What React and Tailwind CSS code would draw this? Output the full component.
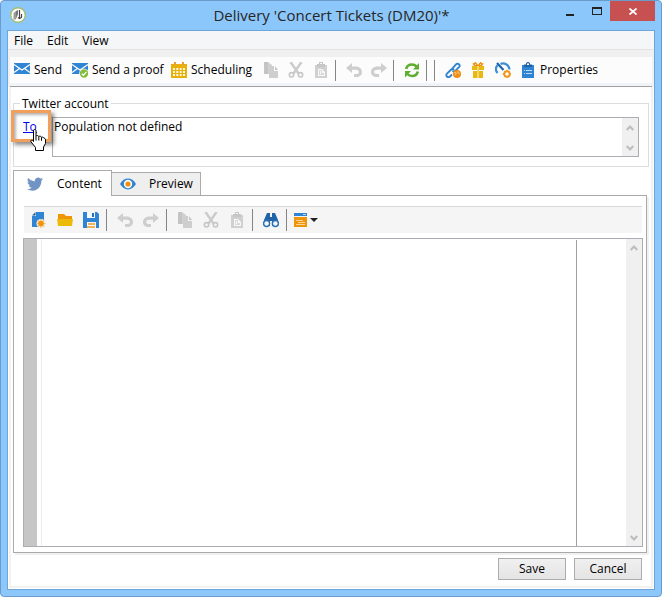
import React from "react";

function Icon({ children, className = "" }) {
  return (
    <svg viewBox="0 0 16 16" className={`h-4 w-4 shrink-0 ${className}`} fill="none" aria-hidden="true">
      {children}
    </svg>
  );
}

const MailIcon = () => (
  <Icon>
    <path d="M0 1h16v11H0z" fill="#2f84d3" />
    <path d="M0 2.500l8 5.500 8-5.500M0 10.500l5.500-4M16 10.500L10.500 6.500" stroke="#fff" strokeWidth="1.200" />
  </Icon>
);

const ProofIcon = () => (
  <Icon>
    <path d="M0 1h16v11H0z" fill="#2f84d3" />
    <path d="M0 2.500l8 5.500 8-5.500M0 10.500l5.500-4" stroke="#fff" strokeWidth="1.200" />
    <circle cx="12" cy="11.500" r="4.800" fill="#fff" />
    <circle cx="12" cy="11.500" r="4.200" fill="#86bc3c" />
    <path d="M9.800 11.700l1.600 1.600 3-3.500" stroke="#fff" strokeWidth="1.300" />
  </Icon>
);

const CalendarIcon = () => (
  <Icon>
    <path d="M0 2h16v14H0z" fill="#e9b00c" />
    <path d="M3 0h2v3H3zM11 0h2v3h-2z" fill="#ef9a3c" />
    <path d="M2 6h2v2H2zM5.300 6h2v2h-2zM8.700 6h2v2h-2zM12 6h2v2h-2zM2 9h2v2H2zM5.300 9h2v2h-2zM8.700 9h2v2h-2zM12 9h2v2h-2zM2 12h2v2H2zM5.300 12h2v2h-2zM8.700 12h2v2h-2zM12 12h2v2h-2z" fill="#fff8dd" />
  </Icon>
);

const CopyIcon = () => (
  <Icon>
    <path d="M1 0h4v12H1z" fill="#c4c4c4" />
    <path d="M5 0l4 3v1H6v8H5z" fill="#d0d0d0" />
    <path d="M6 4h5v5h4v7H6z" fill="#cecece" />
    <path d="M12 4l3 4h-3z" fill="#c4c4c4" />
  </Icon>
);

const CutIcon = () => (
  <Icon>
    <path d="M2.500 0l8 11.500M13.500 0l-8 11.500" stroke="#cbcbcb" strokeWidth="2.400" />
    <circle cx="3.500" cy="12.800" r="2.200" stroke="#c6c6c6" strokeWidth="1.600" />
    <circle cx="12.500" cy="12.800" r="2.200" stroke="#c6c6c6" strokeWidth="1.600" />
  </Icon>
);

const PasteIcon = () => (
  <Icon>
    <path d="M2 3h12v13H2z" fill="#d0d0d0" />
    <path d="M4 5V2h2V0h4v2h2v3z" fill="#c6c6c6" />
    <path d="M7 1h2v1H7zM5 7h4l3 3v4H5z" fill="#f8f8f8" />
    <path d="M6 8h3v3h2v2H6z" fill="#dadada" />
    <path d="M7 9h1v3H7z" fill="#f8f8f8" />
  </Icon>
);

const UndoIcon = () => (
  <Icon>
    <path d="M0 6l6-5v3.400h3.500C13.500 4.400 16 6.700 16 10s-2.500 5-5.500 5H8v-3h2.500c1.500 0 2.300-.8 2.300-2 0-1.500-1.200-2.300-3-2.300H6V11z" fill="#cecece" />
  </Icon>
);

const RedoIcon = () => (
  <Icon>
    <path d="M16 6l-6-5v3.400H6.500C2.500 4.400 0 6.700 0 10s2.500 5 5.500 5H8v-3H5.500c-1.500 0-2.300-.8-2.300-2 0-1.500 1.200-2.300 3-2.300H10V11z" fill="#cecece" />
  </Icon>
);

const RefreshIcon = () => (
  <Icon>
    <path d="M2.200 7C2.800 4 5 2.500 8 2.500c2 0 3.500.8 4.500 2M13.800 9.500c-.6 3-2.800 4.500-5.800 4.500-2 0-3.500-.8-4.500-2" stroke="#5fae32" strokeWidth="2.600" />
    <path d="M15 1v6.500H9zM1 15.500V9h6z" fill="#5fae32" />
  </Icon>
);

const LinkIcon = () => (
  <Icon>
    <g stroke="#3184cd" strokeWidth="1.900" strokeLinejoin="round">
      <path d="M7 6.800L11 2.400c.8-.9 2-.9 2.900-.1.900.8.900 2 .1 2.900L10.500 8.700c-.9.800-2.200.8-3 0" />
      <path d="M9 7.800c-.8-.9-2.100-.9-3-.1L2 11.600c-.9.900-.9 2.100-.1 2.900.8.800 2.100.8 3 0L7 12.500" />
    </g>
    <circle cx="12" cy="12" r="4" fill="#ee8c13" />
    <path d="M9.300 10.300l2 .7-.5 1.500-1 .5M12.700 9.300l.3 1.700 1.700.3" stroke="#ffd9a0" strokeWidth=".8" />
  </Icon>
);

const GiftIcon = () => (
  <Icon>
    <path d="M7.500 3.500L5.500.9 3.500 2l1.500 1.700zM8.500 3.500l2-2.600 2 1.100L11 3.700z" stroke="#ef9114" strokeWidth="1.500" />
    <path d="M2 4h5v4H2zM9 4h5v4H9zM3 9h4v7H3zM9 9h4v7H9z" fill="#eab90d" />
    <path d="M7 4h2v12H7z" fill="#fff" />
    <path d="M7.300 4h1.400v12H7.300z" fill="#f0c040" />
  </Icon>
);

const GaugeIcon = () => (
  <Icon>
    <path d="M2.500 11C.5 8.500.5 5.500 2.500 3.200M5.500 1.900c3.500-1.700 8.500.6 9 5.600" stroke="#3b8fd7" strokeWidth="2.200" />
    <path d="M2 1l6.500 7" stroke="#1c65a8" strokeWidth="2.200" />
    <circle cx="12" cy="12" r="2.700" stroke="#f09a22" strokeWidth="2" fill="#fff" />
    <path d="M12 7.800v2M12 14.300v1.700M7.800 12h2M14.200 12H16M9.200 9.200l1 1M14.800 9.200l-1 1M9.200 14.800l1-1M14.800 14.800l-1-1" stroke="#f09a22" strokeWidth="1.300" />
  </Icon>
);

const PropertiesIcon = () => (
  <Icon>
    <path d="M2 3h12v13H2z" fill="#2f84d3" />
    <path d="M4 5V2.500h2V1.800A2 2 0 0 1 8 0a2 2 0 0 1 2 1.800v.7h2V5z" fill="#1c62a5" />
    <path d="M7 1.500h2v1.500H7z" fill="#fff" />
    <path d="M4 8.500h1M6 8.500h6M4 11.500h1M6 11.500h6" stroke="#bcdcf6" />
  </Icon>
);

const NewIcon = () => (
  <Icon>
    <path d="M5 0h8v8H9l-2 3v4H1V4h4z" fill="#2f84d3" />
    <path d="M1 3.500L4.500 0v3.500z" fill="#1c62a5" />
    <circle cx="10" cy="11.500" r="4.500" fill="#f5f5f5" />
    <path d="M10 7v9M5.500 11.500h9M6.800 8.300l6.400 6.400M13.200 8.300l-6.400 6.400" stroke="#f6bf75" strokeWidth="1.400" />
    <circle cx="10" cy="11.500" r="2.700" fill="#f0920c" />
  </Icon>
);

const FolderIcon = () => (
  <Icon>
    <path d="M1 2h6l2 2h6v3H1z" fill="#ef9508" />
    <path d="M0 7h16l-1 7H1z" fill="#ecba0b" />
  </Icon>
);

const SaveIcon = () => (
  <Icon>
    <path d="M0 0h14l2 2v14H0z" fill="#2f84d3" />
    <path d="M4 0h8v6H4zM4 10h9v6H4z" fill="#f5f7fa" />
    <path d="M9 1h2v4H9z" fill="#2470b9" />
    <path d="M5 12h7M4 15h8" stroke="#f09a22" strokeWidth="1.400" />
  </Icon>
);

const FindIcon = () => (
  <Icon>
    <path d="M4 1h3v4h2V1h3l3 7v6H9V9H7v5H1V8z" fill="#2063a7" />
    <circle cx="3.600" cy="11.500" r="3" fill="#f5f5f5" stroke="#2a70b5" strokeWidth="1.400" />
    <circle cx="12.400" cy="11.500" r="3" fill="#f5f5f5" stroke="#2a70b5" strokeWidth="1.400" />
  </Icon>
);

const TemplateIcon = () => (
  <Icon>
    <path d="M2 1h13v4H2z" fill="#2f84d3" />
    <path d="M2 5h13v10H2z" fill="#ef9508" />
    <path d="M11 2.500h3" stroke="#b8dbf5" />
    <path d="M2 4.500h13" stroke="#f5f5f5" />
    <path d="M4 8.500h7M6 10.500h7M4 12.500h9" stroke="#fbd49a" />
  </Icon>
);

const TwitterIcon = () => (
  <Icon>
    <path d="M16 3c-.6.300-1.200.4-1.900.5.700-.4 1.200-1 1.400-1.800-.6.400-1.300.6-2.100.8A3.300 3.300 0 0 0 7.800 5.500 9.300 9.300 0 0 1 1.100 2.100a3.300 3.300 0 0 0 1 4.400c-.5 0-1-.2-1.500-.4 0 1.600 1.100 2.900 2.600 3.200-.5.100-1 .2-1.500.1.400 1.300 1.600 2.200 3.100 2.300A6.600 6.600 0 0 1 0 13.100C6.900 17.300 14.500 13 14.400 4.700 15 4.300 15.600 3.700 16 3z" fill="#7294c4" />
  </Icon>
);

const EyeIcon = () => (
  <Icon>
    <path d="M0 8C4 .8 12 .8 16 8c-4 7.200-12 7.200-16 0z" fill="#2f84d3" />
    <circle cx="8" cy="8" r="4.200" fill="#fff" />
    <circle cx="8" cy="8" r="2.600" fill="#ef9114" />
  </Icon>
);

const HandCursor = () => (
  <svg viewBox="0 0 17 22" className="pointer-events-none absolute top-3 left-[10px] z-20 h-[22px] w-[17px]" aria-hidden="true">
    <path
      d="M3.500 1.500c0-1.300 2.500-1.300 2.500 0V7c.8-.8 2.300-.6 2.800.5.900-.6 2.300-.3 2.700.8 1-.5 2.100-.1 2.500 1 1-.2 1.500.5 1.500 1.700v3.500L13.500 18v3.500h-8V18.500L1 12.800C.3 11.300 1.800 10.500 2.800 11.500l.7 1z"
      fill="#fff"
      stroke="#000"
    />
    <path d="M6 7v4.500M8.800 7.500v4M11.500 8.300v3.500" stroke="#000" />
  </svg>
);

function Chevron({ down }) {
  return (
    <button type="button" aria-label={down ? "Scroll down" : "Scroll up"} className="flex h-4 w-4 items-center justify-center">
      <svg viewBox="0 0 8 7" className="h-[7px] w-2" fill="none" aria-hidden="true">
        <path d={down ? "M.7 1L4 4.500 7.300 1" : "M.7 6L4 2.500 7.300 6"} stroke="#bdbdbd" strokeWidth="2.200" />
      </svg>
    </button>
  );
}

function ScrollBar({ className = "" }) {
  return (
    <div className={`flex w-4 shrink-0 flex-col justify-between bg-[#f0f0f0] ${className}`}>
      <Chevron />
      <Chevron down />
    </div>
  );
}

function Tool({ label, text, className = "", children }) {
  return (
    <button type="button" aria-label={label} className={`flex shrink-0 items-center gap-1 whitespace-nowrap ${className}`}>
      {children}
      {text}
    </button>
  );
}

const Separator = ({ className = "" }) => <span className={`w-px shrink-0 bg-[#858585] ${className}`} />;

function EditTools({ gap }) {
  return (
    <div className={`flex ${gap}`}>
      <Tool label="Copy"><CopyIcon /></Tool>
      <Tool label="Cut"><CutIcon /></Tool>
      <Tool label="Paste"><PasteIcon /></Tool>
    </div>
  );
}

function HistoryTools({ gap }) {
  return (
    <div className={`flex ${gap}`}>
      <Tool label="Undo"><UndoIcon /></Tool>
      <Tool label="Redo"><RedoIcon /></Tool>
    </div>
  );
}

function TitleBar() {
  return (
    <header className="flex h-[29px] items-start">
      <svg viewBox="0 0 16 16" className="mt-[6px] ml-[9px] h-4 w-4" aria-hidden="true">
        <circle cx="8" cy="8" r="7.300" fill="#fff" stroke="#a2bd70" strokeWidth="1.400" />
        <path d="M3.500 6L6 4v8.500H3.500z" fill="#9a9a9a" />
        <path d="M6 4l2-1v4L6 12z" fill="#777" />
        <path d="M9.500 3v8M8 10.500l1.500 1 2-1V7" stroke="#444" strokeWidth="1.200" fill="none" />
      </svg>
      <h1 className="flex-1 pt-[3px] pl-20 text-center text-[15px] leading-[22px] text-[#262626]">
        Delivery 'Concert Tickets (DM20)'*
      </h1>
      <div className="mr-[6px] flex h-5">
        <button type="button" aria-label="Minimize" className="flex w-[26px] items-center justify-center pt-[7px]">
          <span className="h-[2px] w-2 bg-[#222]" />
        </button>
        <button type="button" aria-label="Maximize" className="flex w-[27px] items-center justify-center">
          <span className="h-2 w-[10px] border border-t-2 border-[#222]" />
        </button>
        <button type="button" aria-label="Close" className="flex w-[45px] items-center justify-center bg-[#c75050]">
          <svg viewBox="0 0 8 7" className="h-[7px] w-2" aria-hidden="true">
            <path d="M.5.5l7 6M7.500.5l-7 6" stroke="#fff" strokeWidth="1.700" />
          </svg>
        </button>
      </div>
    </header>
  );
}

function MainToolbar() {
  return (
    <div className="mx-[2px] flex h-[26px] items-center bg-[#fcfcfc] pl-1">
      <Tool text="Send" className="w-[58px]"><MailIcon /></Tool>
      <Tool text="Send a proof" className="w-[99px]"><ProofIcon /></Tool>
      <Tool text="Scheduling" className="w-[92px]"><CalendarIcon /></Tool>
      <EditTools gap="gap-[9px]" />
      <Separator className="mr-[10px] ml-[6px] h-[21px]" />
      <HistoryTools gap="gap-[9px]" />
      <Separator className="mr-[10px] ml-[6px] h-[21px]" />
      <Tool label="Refresh"><RefreshIcon /></Tool>
      <Separator className="ml-[6px] h-[21px]" />
      <Separator className="mr-[10px] ml-[7px] h-[21px]" />
      <div className="flex gap-[9px]">
        <Tool label="Tracking"><LinkIcon /></Tool>
        <Tool label="Offers"><GiftIcon /></Tool>
        <Tool label="Performance"><GaugeIcon /></Tool>
        <Tool text="Properties"><PropertiesIcon /></Tool>
      </div>
    </div>
  );
}

function EditorToolbar() {
  return (
    <div className="mr-1 ml-[10px] flex h-[27px] shrink-0 items-center border-t border-[#d9d9d9] bg-[#f5f5f5] pl-[7px]">
      <div className="flex gap-[10px]">
        <Tool label="New"><NewIcon /></Tool>
        <Tool label="Open"><FolderIcon /></Tool>
        <Tool label="Save content"><SaveIcon /></Tool>
      </div>
      <Separator className="mr-[10px] ml-[7px] h-[22px]" />
      <HistoryTools gap="gap-[10px]" />
      <Separator className="mr-[10px] ml-[7px] h-[22px]" />
      <EditTools gap="gap-[10px]" />
      <Separator className="mr-[10px] ml-[7px] h-[22px]" />
      <Tool label="Find"><FindIcon /></Tool>
      <Separator className="mr-[5px] ml-[7px] h-[22px]" />
      <button type="button" aria-label="Insert" className="flex items-center gap-[2px]">
        <TemplateIcon />
        <svg viewBox="0 0 8 4" className="h-1 w-2" aria-hidden="true"><path d="M0 0h8L4 4z" fill="#222" /></svg>
      </button>
    </div>
  );
}

export default function App() {
  return (
    <div className="flex min-h-screen flex-col bg-white pr-[10px] pb-[17px] font-['Open_Sans','Noto_Sans',sans-serif] text-[12px] leading-4 text-black">
      <div className="flex flex-1 flex-col rounded-[4px] border border-[#6a9bcb] bg-[#8cc7fb]">
        <TitleBar />
        <main className="mx-[6px] mb-[6px] flex flex-1 flex-col border border-[#6fa6d8] bg-white">
          <nav className="flex h-[19px] shrink-0 items-center gap-[14px] border-b border-[#e3e3e3] bg-[#f5f6f7] pt-[2px] pl-[6px]">
            <button type="button">File</button>
            <button type="button">Edit</button>
            <button type="button">View</button>
          </nav>
          <div className="shrink-0 bg-[#f0f0f0] pt-[7px]">
            <MainToolbar />
            <div className="mx-[2px] h-1 border-b border-[#a0a0a0] bg-[#f0f3f8]" />
          </div>

          <div className="mx-px mb-px flex flex-1 flex-col border-x-2 border-b-2 border-[#f2f2f2] px-[2px]">
            <fieldset className="mt-[7px] shrink-0 border border-[#dcdcdc] pr-[9px] pb-[9px] pl-[6px]">
              <legend className="px-[2px] pt-[2px]">Twitter account</legend>
              <div className="relative mt-[5px] flex">
                <a href="#to" className="w-[32px] shrink-0 pt-[2px] pl-[3px] text-[#0000ee] underline">To</a>
                <span className="pointer-events-none absolute -top-[7px] -left-[9px] z-10 h-8 w-10 border-[3px] border-[#f0a05a] shadow-[3px_3px_4px_rgba(0,0,0,0.45),inset_2px_2px_3px_rgba(0,0,0,0.3)]" />
                <HandCursor />
                <div className="flex h-10 min-w-0 flex-1 border border-[#abadb3]">
                  <textarea
                    readOnly
                    aria-label="Recipients"
                    defaultValue="Population not defined"
                    className="min-w-0 flex-1 resize-none overflow-hidden pt-px pl-px outline-none"
                  />
                  <ScrollBar className="pt-px" />
                </div>
              </div>
            </fieldset>

            <div role="tablist" className="mt-[3px] flex h-[25px] shrink-0 items-end">
              <button type="button" role="tab" aria-selected="true" className="z-10 -mb-px flex h-[26px] w-[99px] items-center gap-[14px] border border-b-0 border-[#ababab] bg-white pl-[13px]">
                <TwitterIcon />
                Content
              </button>
              <button type="button" role="tab" aria-selected="false" className="flex h-[23px] w-[89px] items-center gap-[13px] border border-b-0 border-l-0 border-[#ababab] bg-[#efefef] pl-2">
                <EyeIcon />
                Preview
              </button>
            </div>
            <section className="mr-[2px] flex flex-1 flex-col border border-[#a9a9ad] pt-[10px] shadow-[2px_2px_0_#f0f0f0]">
              <EditorToolbar />
              <div className="mt-[5px] mr-[3px] mb-[5px] ml-[9px] flex flex-1 border border-[#abadb3]">
                <div className="w-[13px] bg-[#c6c6c6]" />
                <textarea
                  aria-label="Message content"
                  className="ml-1 min-w-0 flex-1 resize-none border-l border-[#ececec] outline-none"
                />
                <div className="mt-px w-[50px] border-l border-[#a0a0a0]" />
                <ScrollBar />
              </div>
            </section>

            <footer className="flex shrink-0 justify-end gap-2 pt-[5px] pr-[7px] pb-[6px]">
              <button type="button" className="h-[22px] w-[68px] border border-[#acacac] bg-linear-to-b from-[#f0f0f0] to-[#e4e4e4]">Save</button>
              <button type="button" className="h-[22px] w-[68px] border border-[#acacac] bg-linear-to-b from-[#f0f0f0] to-[#e4e4e4]">Cancel</button>
            </footer>
          </div>
        </main>
      </div>
    </div>
  );
}
